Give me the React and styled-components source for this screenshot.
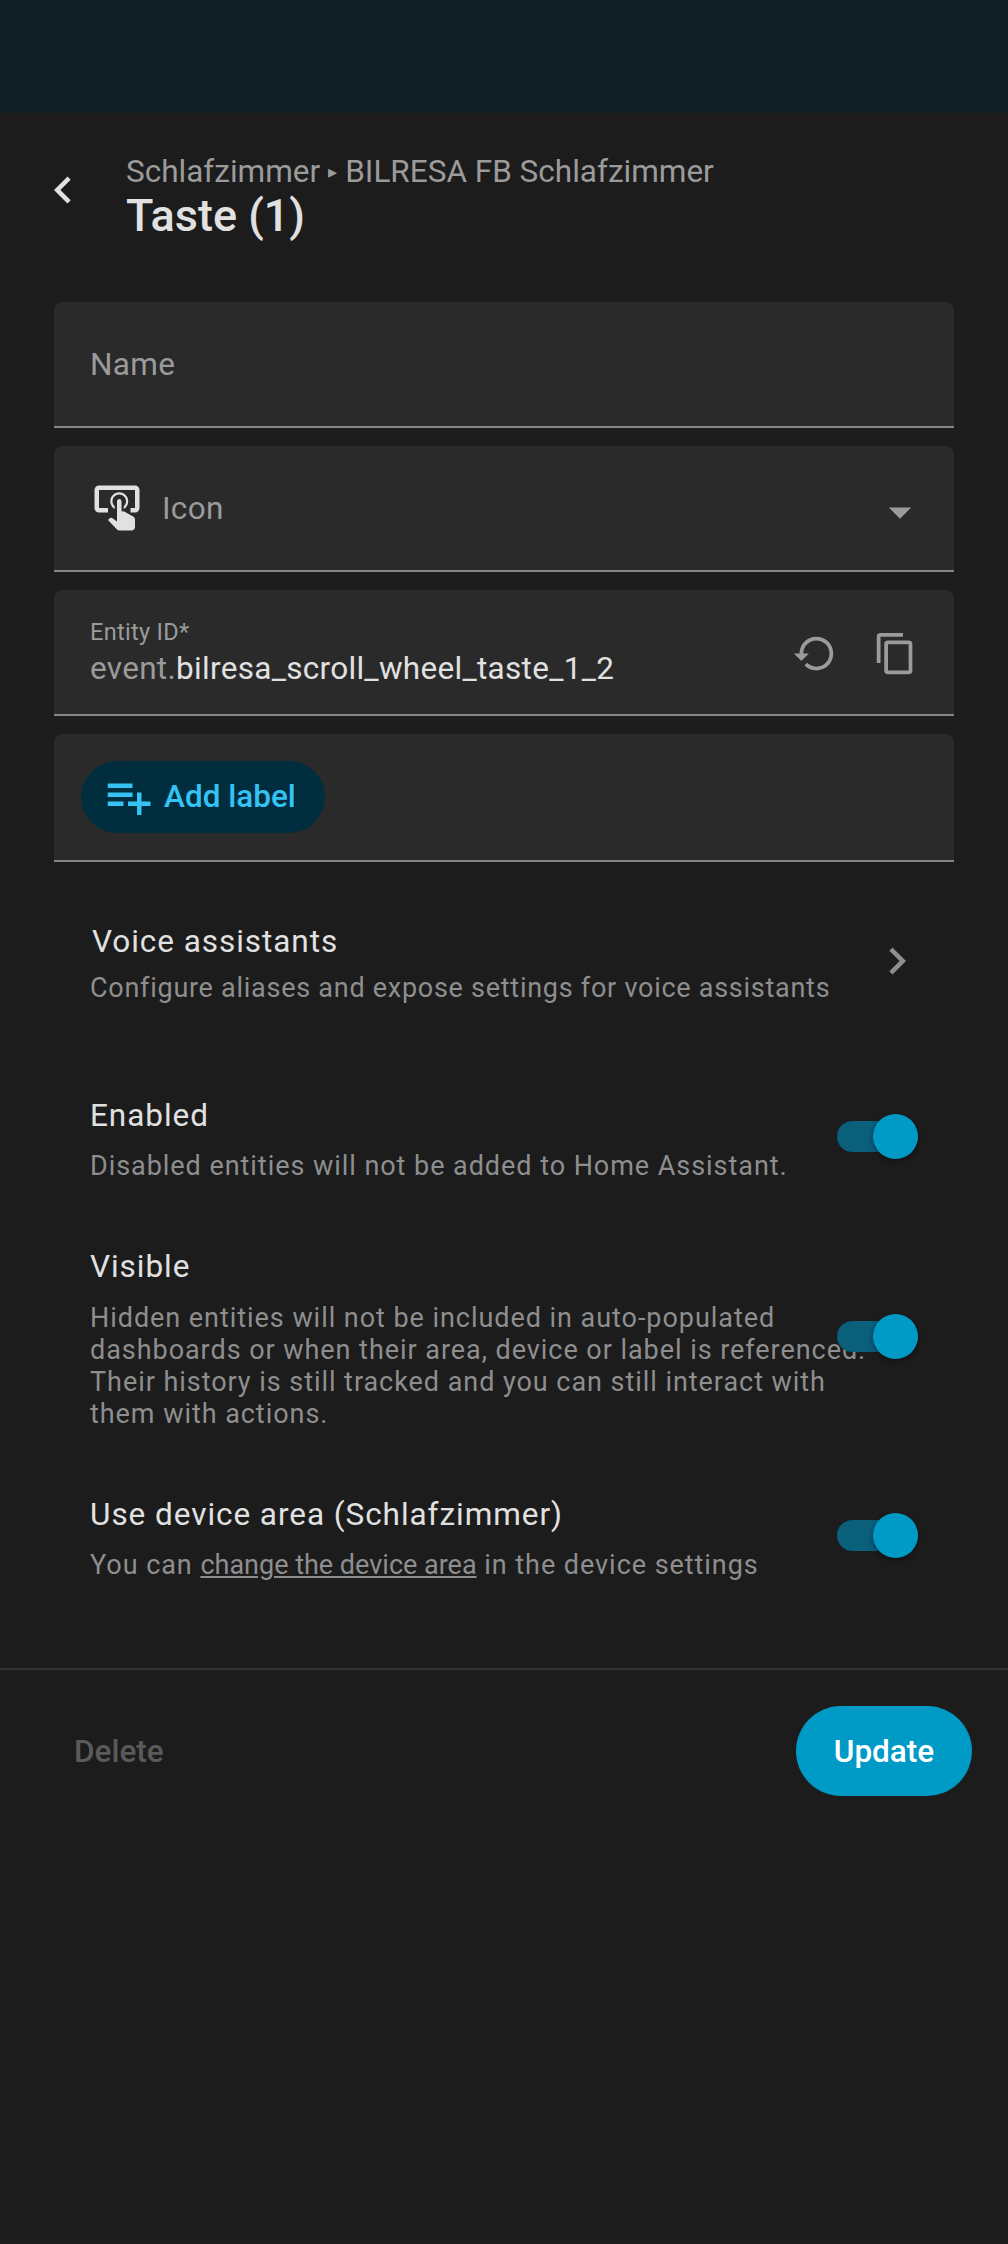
import styled, { createGlobalStyle } from 'styled-components';

const GlobalStyle = createGlobalStyle`
    html, body {
        margin: 0;
        padding: 0;
        background: #1c1c1c;
    }
    body {
        font-family: Roboto, "Noto Sans", sans-serif;
        color: #e1e1e1;
    }
`;

const Page = styled.div`
    width: 1008px;
    min-height: 2244px;
    background: #1c1c1c;
`;

const StatusBar = styled.div`
    height: 113px;
    background: #101e24;
`;

const Header = styled.header`
    display: flex;
    align-items: flex-start;
    height: 189px;
    padding: 40px 0 0 36px;
    box-sizing: border-box;
`;

const BackIcon = styled.svg`
    width: 54px;
    height: 54px;
    margin-top: 10px;
    fill: #e1e1e1;
    flex-shrink: 0;
`;

const HeaderText = styled.div`
    margin-left: 36px;
`;

const Breadcrumb = styled.div`
    font-size: 31.5px;
    line-height: 38px;
    color: #9b9b9b;
`;

const Caret = styled.span`
    font-size: 18px;
    vertical-align: 4px;
    margin: 0 8px;
`;

const Title = styled.h1`
    margin: -2px 0 0;
    font-size: 45px;
    line-height: 54px;
    font-weight: 500;
    color: #e1e1e1;
`;

const Fields = styled.div`
    display: flex;
    flex-direction: column;
    gap: 18px;
    margin: 0 54px;
`;

const Field = styled.div`
    display: flex;
    align-items: center;
    height: ${(p) => p.$height || 126}px;
    box-sizing: border-box;
    background: #2a2a2a;
    border-bottom: 2px solid #858585;
    border-radius: 9px 9px 0 0;
    padding: 0 ${(p) => p.$right || 36}px 0 ${(p) => p.$left ?? 36}px;
`;

const FieldLabel = styled.span`
    font-size: 31.5px;
    color: #9b9b9b;
    letter-spacing: 0.3px;
`;

const FieldIcon = styled.svg`
    width: 54px;
    height: 54px;
    fill: #e1e1e1;
    flex-shrink: 0;
    margin-right: 18px;
`;

const Arrow = styled.svg`
    width: 54px;
    height: 54px;
    margin-left: auto;
    margin-top: 8px;
    fill: #9b9b9b;
`;

const EntityText = styled.div`
    flex: 1;
    padding-top: 2px;
`;

const SmallLabel = styled.div`
    font-size: 23.5px;
    line-height: 32px;
    color: #9b9b9b;
    letter-spacing: 0.3px;
`;

const EntityValue = styled.div`
    font-size: 31.5px;
    line-height: 42px;
    color: #e1e1e1;
    letter-spacing: 0.3px;

    span {
        color: #9b9b9b;
    }
`;

const IconButton = styled.div`
    display: flex;
    align-items: center;
    justify-content: center;
    width: 81px;
    height: 81px;
    margin-top: 3px;
`;

const ActionIcon = styled.svg`
    width: 45px;
    height: 45px;
    fill: #9b9b9b;
`;

const Chip = styled.div`
    display: flex;
    align-items: center;
    height: 72px;
    width: 244px;
    box-sizing: border-box;
    padding-left: 20px;
    border-radius: 36px;
    background: #002e3e;
    color: #35c2f5;
    font-size: 31.5px;
    font-weight: 500;
`;

const ChipIcon = styled.svg`
    width: 54px;
    height: 54px;
    fill: #35c2f5;
    margin-right: 9px;
`;

const ChipLabel = styled.span`
    margin-top: -2px;
`;

const LinkRow = styled.div`
    display: flex;
    align-items: center;
    justify-content: space-between;
    margin: 51px 54px 0 90px;
    height: 100px;
    padding-right: 36px;
`;

const RowTitle = styled.div`
    font-size: 31.5px;
    line-height: 40px;
    color: #e1e1e1;
    letter-spacing: 0.95px;
    margin-left: ${(p) => p.$indent || 0}px;
`;

const RowText = styled.div`
    font-size: 27px;
    line-height: 32px;
    color: #8e8e8e;
    letter-spacing: ${(p) => p.$spacing ?? 0.95}px;
    margin-top: ${(p) => p.$gap ?? 14}px;

    a {
        color: inherit;
        letter-spacing: 0;
        text-decoration: underline;
    }
`;

const RowChevron = styled.svg`
    width: 54px;
    height: 54px;
    fill: #8e8e8e;
    margin: 0 -6px 4px 0;
`;

const Settings = styled.div`
    margin: 0 90px;
`;

const SettingRow = styled.div`
    display: flex;
    align-items: center;
    margin-top: ${(p) => p.$top}px;
`;

const SettingText = styled.div`
    width: 790px;
    flex-shrink: 0;
`;

const Switch = styled.div`
    position: relative;
    flex-shrink: 0;
    width: 81px;
    height: 31px;
    margin: 0 0 5px -43px;
    border-radius: 16px;
    background: #0a5f7a;
`;

const Thumb = styled.div`
    position: absolute;
    top: -7px;
    right: 0;
    width: 45px;
    height: 45px;
    border-radius: 50%;
    background: #009ac7;
    box-shadow: 0 2px 5px rgba(0, 0, 0, 0.45);
`;

const Footer = styled.footer`
    display: flex;
    align-items: center;
    justify-content: space-between;
    margin-top: 87px;
    border-top: 2px solid #333;
    padding: 36px 36px 0 74px;
`;

const DeleteLabel = styled.span`
    font-size: 31.5px;
    font-weight: 500;
    color: #5a5a5a;
`;

const UpdateButton = styled.div`
    display: flex;
    align-items: center;
    justify-content: center;
    width: 176px;
    height: 90px;
    border-radius: 45px;
    background: #009ac7;
    color: #fff;
    font-size: 31.5px;
    font-weight: 500;
`;

const ToggleSwitch = () => (
    <Switch>
        <Thumb />
    </Switch>
);

const App = () => (
    <Page>
        <GlobalStyle />
        <StatusBar />
        <Header>
            <BackIcon viewBox="0 0 24 24">
                <path d="M15.41,16.58L10.83,12L15.41,7.41L14,6L8,12L14,18L15.41,16.58Z" />
            </BackIcon>
            <HeaderText>
                <Breadcrumb>
                    Schlafzimmer<Caret>▸</Caret>BILRESA FB Schlafzimmer
                </Breadcrumb>
                <Title>Taste (1)</Title>
            </HeaderText>
        </Header>
        <Fields>
            <Field>
                <FieldLabel>Name</FieldLabel>
            </Field>
            <Field $right={27}>
                <FieldIcon viewBox="0 0 24 24">
                    <path d="M13 5C15.21 5 17 6.79 17 9C17 10.5 16.2 11.77 15 12.46V11.24C15.61 10.69 16 9.89 16 9C16 7.34 14.66 6 13 6S10 7.34 10 9C10 9.89 10.39 10.69 11 11.24V12.46C9.8 11.77 9 10.5 9 9C9 6.79 10.79 5 13 5M20 20.5C19.97 21.32 19.32 21.97 18.5 22H13C12.62 22 12.26 21.85 12 21.57L8 17.37L8.74 16.6C8.93 16.39 9.2 16.28 9.5 16.28H9.7L12 18V9C12 8.45 12.45 8 13 8S14 8.45 14 9V13.47L15.21 13.6L19.15 15.79C19.68 16.03 20 16.56 20 17.14V20.5M20 2H4C2.9 2 2 2.9 2 4V12C2 13.11 2.9 14 4 14H8V12L4 12L4 4H20L20 12H18V14H20V13.96L20.04 14C21.13 14 22 13.09 22 12V4C22 2.9 21.11 2 20 2Z" />
                </FieldIcon>
                <FieldLabel>Icon</FieldLabel>
                <Arrow viewBox="0 0 24 24">
                    <path d="M7,10L12,15L17,10H7Z" />
                </Arrow>
            </Field>
            <Field $right={18}>
                <EntityText>
                    <SmallLabel>Entity ID*</SmallLabel>
                    <EntityValue>
                        <span>event.</span>bilresa_scroll_wheel_taste_1_2
                    </EntityValue>
                </EntityText>
                <IconButton>
                    <ActionIcon viewBox="0 0 24 24">
                        <path d="M13,3A9,9 0 0,0 4,12H1L4.89,15.89L4.96,16.03L9,12H6A7,7 0 0,1 13,5A7,7 0 0,1 20,12A7,7 0 0,1 13,19C11.07,19 9.32,18.21 8.06,16.94L6.64,18.36C8.27,20 10.5,21 13,21A9,9 0 0,0 22,12A9,9 0 0,0 13,3Z" />
                    </ActionIcon>
                </IconButton>
                <IconButton>
                    <ActionIcon viewBox="0 0 24 24">
                        <path d="M19,21H8V7H19M19,5H8A2,2 0 0,0 6,7V21A2,2 0 0,0 8,23H19A2,2 0 0,0 21,21V7A2,2 0 0,0 19,5M16,1H4A2,2 0 0,0 2,3V17H4V3H16V1Z" />
                    </ActionIcon>
                </IconButton>
            </Field>
            <Field $height={128} $left={27}>
                <Chip>
                    <ChipIcon viewBox="0 0 24 24">
                        <path d="M3 16H10V14H3M18 14V10H16V14H12V16H16V20H18V16H22V14M14 6H3V8H14M14 10H3V12H14V10Z" />
                    </ChipIcon>
                    <ChipLabel>Add label</ChipLabel>
                </Chip>
            </Field>
        </Fields>
        <LinkRow>
            <div>
                <RowTitle $indent={2}>Voice assistants</RowTitle>
                <RowText $gap={10} $spacing={0.73}>
                    Configure aliases and expose settings for voice assistants
                </RowText>
            </div>
            <RowChevron viewBox="0 0 24 24">
                <path d="M8.59,16.58L13.17,12L8.59,7.41L10,6L16,12L10,18L8.59,16.58Z" />
            </RowChevron>
        </LinkRow>
        <Settings>
            <SettingRow $top={83}>
                <SettingText>
                    <RowTitle>Enabled</RowTitle>
                    <RowText>Disabled entities will not be added to Home Assistant.</RowText>
                </SettingText>
                <ToggleSwitch />
            </SettingRow>
            <SettingRow $top={65}>
                <SettingText>
                    <RowTitle>Visible</RowTitle>
                    <RowText $gap={15}>
                        Hidden entities will not be included in auto-populated dashboards or when their area, device or
                        label is referenced. Their history is still tracked and you can still interact with them with
                        actions.
                    </RowText>
                </SettingText>
                <ToggleSwitch />
            </SettingRow>
            <SettingRow $top={65}>
                <SettingText>
                    <RowTitle>Use device area (Schlafzimmer)</RowTitle>
                    <RowText>
                        You can <a>change the device area</a> in the device settings
                    </RowText>
                </SettingText>
                <ToggleSwitch />
            </SettingRow>
        </Settings>
        <Footer>
            <DeleteLabel>Delete</DeleteLabel>
            <UpdateButton>Update</UpdateButton>
        </Footer>
    </Page>
);

export default App;
